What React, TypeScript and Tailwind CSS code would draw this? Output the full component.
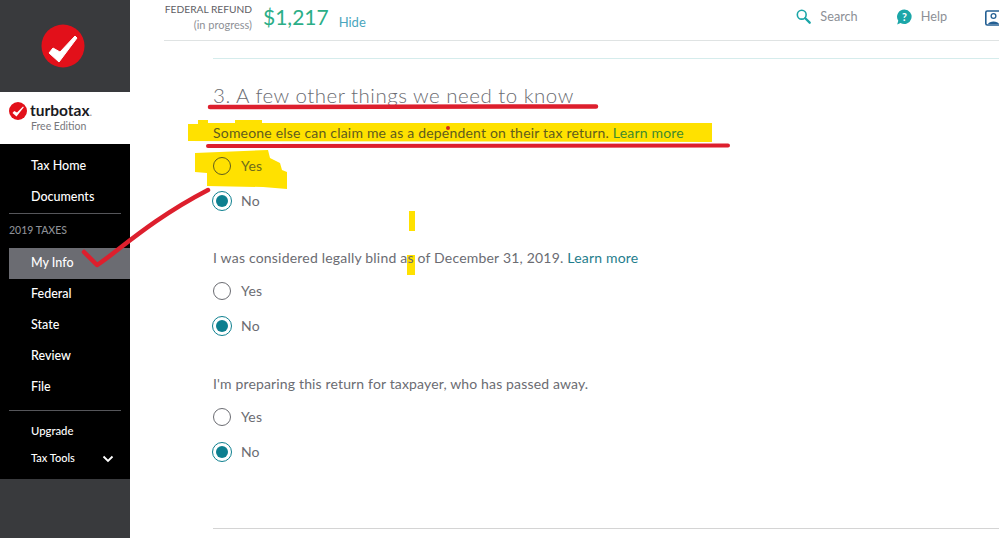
const font = { fontFamily: '"Lato", "Open Sans", sans-serif' };

function NavItem({ label, active = false }: { label: string; active?: boolean }) {
  return (
    <div className={`h-[31px] flex items-center pb-[1px] text-[12.5px] font-medium text-white ${active ? "ml-[9px] pl-[22px] bg-[#6b6c72]" : "pl-[31px]"}`}>
      {label}
    </div>
  );
}

function Sidebar() {
  return (
    <aside className="w-[130px] shrink-0 h-full flex flex-col bg-[#393a3d]">
      <div className="h-[92px] flex items-center justify-center pr-[4px]">
        <svg width="44" height="44" viewBox="0 0 44 44">
          <circle cx="22" cy="22" r="21.5" fill="#e2101a" />
          <path d="M8 29 L12 24 L19 28 L34 12 L36 14 L18 38 Z" fill="#fff" stroke="#fff" strokeWidth="1" strokeLinejoin="round" />
        </svg>
      </div>
      <div className="h-[52px] bg-white pl-[9px] pt-[10px]">
        <div className="flex items-center gap-[3px] h-[18px]">
          <svg width="18" height="18" viewBox="0 0 18 18">
            <circle cx="9" cy="9" r="9" fill="#e2101a" />
            <path d="M3.5 11 L5.2 9 L8 10.5 L14 4.5 L14.8 5.3 L7.5 14.5 Z" fill="#fff" />
          </svg>
          <span className="text-[15.5px] font-bold leading-none text-[#1b1b1f]">
            turbotax<span className="text-[#8d9096] font-normal text-[11px]">.</span>
          </span>
        </div>
        <div className="pl-[22px] text-[10.5px] leading-[13px] text-[#77787c]">Free Edition</div>
      </div>
      <nav className="h-[335px] bg-black pt-[7px]">
        <NavItem label="Tax Home" />
        <NavItem label="Documents" />
        <div className="mx-[9px] border-t border-[#55565a]" />
        <div className="ml-[9px] h-[34px] flex items-center text-[10.5px] font-medium text-[#8d9096]">2019 TAXES</div>
        <NavItem label="My Info" active />
        <NavItem label="Federal" />
        <NavItem label="State" />
        <NavItem label="Review" />
        <NavItem label="File" />
        <div className="mx-[9px] mt-[7px] border-t border-[#55565a]" />
        <div className="h-[27px] mt-[7px] flex items-center pl-[31px] text-[11.3px] font-medium text-white">Upgrade</div>
        <div className="h-[27px] flex items-center justify-between pl-[31px] pr-[16px] text-[11px] font-medium text-white">
          <span>Tax Tools</span>
          <svg width="12" height="8" viewBox="0 0 12 8" fill="none" stroke="#fff" strokeWidth="1.8">
            <path d="M1.5 1.5 L6 6 L10.5 1.5" />
          </svg>
        </div>
      </nav>
      <div className="flex-1 bg-[#393a3d]" />
    </aside>
  );
}

function Header() {
  return (
    <header className="h-[41px] ml-[34px] border-b border-[#dfe3e3] flex">
      <div className="w-[88px] text-right text-[11px] leading-[16px] pt-[1px]">
        <div className="text-[10.2px] text-[#5f6065] whitespace-nowrap">FEDERAL REFUND</div>
        <div className="ml-[1px] text-[#8d9096]">(in progress)</div>
      </div>
      <div className="ml-[11px] pt-[3px] text-[21px] leading-[28px] text-[#2bae87]">$1,217</div>
      <div className="ml-[10px] pt-[13px] text-[13px] leading-[18px] text-[#4aa6bd]">Hide</div>
      <div className="ml-auto flex items-start pt-[7px] text-[12.7px] leading-[18px] text-[#8d9096]">
        <svg width="15" height="15" viewBox="0 0 17 17" fill="none" className="mt-[2px] mr-[9px]">
          <circle cx="6.5" cy="6.5" r="5" stroke="#1ba6a8" strokeWidth="1.8" />
          <path d="M10.5 10.5 L15.5 15.5" stroke="#1ba6a8" strokeWidth="2.6" strokeLinecap="round" />
        </svg>
        <span>Search</span>
        <svg width="17" height="16" viewBox="0 0 18 18" className="mt-[2px] ml-[38px] mr-[8px]">
          <path d="M9 0.5 A8.2 8.2 0 1 1 4.5 15.7 L0.8 17.5 L2 13.2 A8.2 8.2 0 0 1 9 0.5 Z" fill="#1ba6a8" />
          <text x="9" y="13" textAnchor="middle" fontSize="12" fontWeight="700" fill="#fff" fontFamily="Lato, sans-serif">?</text>
        </svg>
        <span>Help</span>
        <svg width="17" height="16" viewBox="0 0 17 16" fill="none" className="mt-[3px] ml-[38px] mr-[-3px] shrink-0">
          <rect x="0.8" y="1" width="15.4" height="14" rx="1.5" stroke="#235f93" strokeWidth="1.6" />
          <circle cx="8.5" cy="6" r="2.4" stroke="#235f93" strokeWidth="1.3" />
          <path d="M3 14 C4 10.5 13 10.5 14 14 Z" fill="#235f93" />
        </svg>
      </div>
    </header>
  );
}

function Radio({ label, checked = false, marked = false }: { label: string; checked?: boolean; marked?: boolean }) {
  return (
    <div className="h-[35px] flex items-center">
      {checked ? (
        <span className="-ml-[1px] mr-[9px] w-[20px] h-[20px] rounded-full border border-[#0d7f8f] flex items-center justify-center">
          <span className="w-[12px] h-[12px] rounded-full bg-[#0d7f8f]" />
        </span>
      ) : (
        <span className={`mr-[10px] w-[18px] h-[18px] rounded-full border ${marked ? "border-[#5f5c1e]" : "border-[#6b6c72]"}`} />
      )}
      <span className={`text-[14px] ${marked ? "text-[#6f6c1c]" : "text-[#6b6c72]"}`}>{label}</span>
    </div>
  );
}

function Question({ text, learnMore = false, marked = false, className = "" }: { text: string; learnMore?: boolean; marked?: boolean; className?: string }) {
  return (
    <section className={className}>
      <p className={`h-[20px] leading-[20px] text-[14px] whitespace-nowrap ${marked ? "text-[#5f5c1e]" : "text-[#6b6c72]"}`}>
        {text}
        {learnMore && <span className={marked ? "text-[#3f8a2e]" : "text-[#1f7d8c]"}> Learn more</span>}
      </p>
      <div className="mt-[5px]">
        <Radio label="Yes" marked={marked} />
        <Radio label="No" checked />
      </div>
    </section>
  );
}

export default function App() {
  return (
    <div className="relative w-[999px] h-[538px] overflow-hidden bg-white flex" style={font}>
      {/* yellow marker goes under the text */}
      <svg className="absolute inset-0 pointer-events-none" width="999" height="538" fill="#ffe100">
        <path d="M188 124 L198 124 L198 120 L208 120 L208 123 L235 123 L235 120 L262 120 L262 123 L712 123 L712 142 L188 141 Z" />
        <path d="M195 153 L268 150 L270 158 L280 163 L282 170 L287 172 L287 189 L263 187 L207 186 L207 173 L195 172 Z" />
        <rect x="409" y="211" width="6" height="20" />
        <rect x="407" y="255" width="8" height="20" />
      </svg>
      <Sidebar />
      <main className="relative flex-1 min-w-0">
        <Header />
        <div className="ml-[83px] mt-[17px] border-t border-[#d5ecec]" />
        <div className="ml-[83px]">
          <h2 className="mt-[21px] h-[30px] text-[20.5px] font-light leading-[30px] tracking-[0.5px] text-[#6b6c72]">3. A few other things we need to know</h2>
          <Question className="mt-[13px] tracking-[0.2px]" text="Someone else can claim me as a dependent on their tax return." learnMore marked />
          <Question className="mt-[30px] tracking-[0.2px]" text="I was considered legally blind as of December 31, 2019." learnMore />
          <Question className="mt-[31px] tracking-[0.15px]" text="I'm preparing this return for taxpayer, who has passed away." />
          <div className="mt-[59px] border-t border-[#d4d4d4]" />
        </div>
      </main>
      {/* red pen marks sit on top of everything */}
      <svg className="absolute inset-0 pointer-events-none" width="999" height="538" fill="none" stroke="#dd1f2d" strokeLinecap="round" strokeLinejoin="round">
        <path d="M210 107 L596 106.5" strokeWidth="4.5" />
        <path d="M208 146 L728 145.5" strokeWidth="4" />
        <circle cx="448" cy="128" r="2" fill="#d22a1c" stroke="none" />
        <path d="M84 252 L97 265 C115 254 150 220 208 190" strokeWidth="4.5" />
      </svg>
    </div>
  );
}
